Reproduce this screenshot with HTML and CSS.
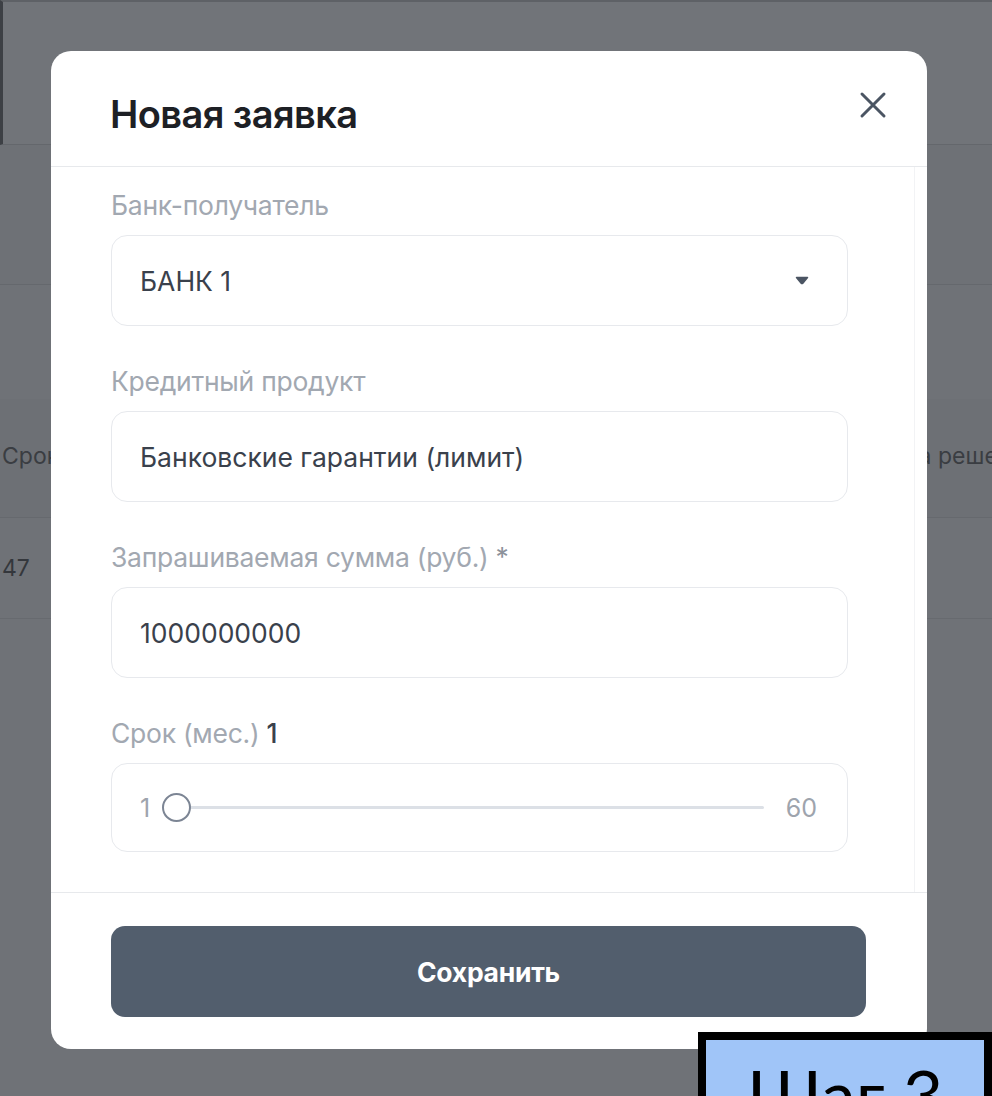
FILE: index.html
```html
<!DOCTYPE html>
<html lang="ru">
<head>
<meta charset="utf-8">
<title>Новая заявка</title>
<link rel="stylesheet" href="styles.css">
</head>
<body>
<div class="page">
  <div class="topbar"></div>
  <div class="band"></div>
  <div class="spacer"></div>
  <div class="thead">
    <span class="cell-left">Срок</span>
    <span class="cell-right">Дата решения</span>
  </div>
  <div class="trow">
    <span class="cell-left">47</span>
  </div>
</div>

<div class="modal">
  <div class="modal-header">
    <h2 class="modal-title">Новая заявка</h2>
    <button class="close-btn" type="button" aria-label="Закрыть">
      <svg width="28" height="28" viewBox="0 0 28 28"><path d="M3 3 L25 25 M25 3 L3 25" stroke="#4b5563" stroke-width="3" stroke-linecap="round" fill="none"/></svg>
    </button>
  </div>
  <div class="modal-body">
    <div class="field">
      <div class="label">Банк-получатель</div>
      <div class="input select">
        <span>БАНК 1</span>
        <svg class="caret" width="14" height="9" viewBox="0 0 14 9"><path d="M1.5 1.5 H12.5 L7.8 7.2 Q7 8 6.2 7.2 Z" fill="#4b5563" stroke="#4b5563" stroke-width="1.5" stroke-linejoin="round"/></svg>
      </div>
    </div>
    <div class="field">
      <div class="label">Кредитный продукт</div>
      <div class="input"><span>Банковские гарантии (лимит)</span></div>
    </div>
    <div class="field">
      <div class="label">Запрашиваемая сумма (руб.) <span class="req">*</span></div>
      <div class="input"><span>1000000000</span></div>
    </div>
    <div class="field">
      <div class="label">Срок (мес.) <span class="val">1</span></div>
      <div class="input slider">
        <span class="min">1</span>
        <div class="range"><span class="thumb"></span></div>
        <span class="max">60</span>
      </div>
    </div>
  </div>
  <div class="modal-footer">
    <button class="save-btn" type="button">Сохранить</button>
  </div>
</div>

<div class="step">Шаг 3</div>
</body>
</html>
```
FILE: styles.css
```css
html, body {
  margin: 0;
  padding: 0;
  width: 992px;
  height: 1096px;
  overflow: hidden;
}
body {
  position: relative;
  font-family: Inter, "Noto Sans", sans-serif;
  background: #6f7277;
}
.page {
  width: 992px;
  height: 1096px;
  background: #6f7277;
  display: flex;
  flex-direction: column;
}
.topbar {
  height: 142px;
  background: #717479;
  border-top: 2px solid #5e6166;
  border-left: 3px solid #3d4045;
  border-bottom: 1px solid #64676c;
}
.band {
  height: 139px;
  background: #6e7176;
  border-bottom: 1px solid #65686d;
}
.spacer {
  height: 114px;
  background: #6f7277;
}
.thead {
  height: 119px;
  background: #6d7075;
  border-bottom: 1px solid #66696e;
  display: flex;
  align-items: flex-start;
  padding-top: 44px;
  box-sizing: border-box;
  font-size: 23px;
  line-height: 26px;
  color: #3a3d42;
  white-space: nowrap;
  overflow: hidden;
}
.trow {
  height: 100px;
  border-bottom: 1px solid #676a6f;
  display: flex;
  align-items: center;
  font-size: 23px;
  color: #34373c;
}
.cell-left {
  padding-left: 2px;
}
.cell-right {
  margin-left: 817px;
}

.modal {
  position: absolute;
  left: 51px;
  top: 51px;
  width: 876px;
  background: #ffffff;
  border-radius: 20px;
  display: flex;
  flex-direction: column;
}
.modal-header {
  height: 115px;
  border-bottom: 1px solid #e7e9ec;
  display: flex;
  justify-content: space-between;
  align-items: flex-start;
  padding: 0 40px 0 59px;
}
.modal-title {
  margin: 41px 0 0 0;
  font-size: 38px;
  line-height: 44px;
  font-weight: 600;
  letter-spacing: -0.015em;
  color: #1d2025;
}
.close-btn {
  margin-top: 40px;
  width: 28px;
  height: 28px;
  padding: 0;
  border: none;
  background: none;
  display: flex;
}
.modal-body {
  margin-right: 12px;
  border-right: 1px solid #f2f3f5;
  padding: 20px 66px 40px 60px;
  display: flex;
  flex-direction: column;
  gap: 37px;
}
.label {
  height: 36px;
  line-height: 36px;
  margin-bottom: 12px;
  font-size: 26.5px;
  color: #a2a8b1;
  letter-spacing: -0.01em;
}
.label .req {
  color: #8c929b;
}
.label .val {
  color: #3a414c;
  font-weight: 500;
}
.input {
  height: 91px;
  box-sizing: border-box;
  border: 1px solid #e7e9ed;
  border-radius: 16px;
  padding: 0 28px;
  display: flex;
  align-items: center;
  font-size: 26.5px;
  color: #3a414c;
}
.select {
  justify-content: space-between;
  padding-right: 38px;
}
.caret {
  display: block;
}
.slider {
  height: 89px;
  padding: 0 30px 0 28px;
  font-size: 25px;
  color: #9ea4ad;
}
.min {
  width: 12px;
}
.range {
  flex: 1;
  margin-left: 10px;
  height: 29px;
  position: relative;
}
.range::before {
  content: "";
  position: absolute;
  left: 20px;
  right: 0;
  top: 13px;
  height: 3px;
  background: #dce0e6;
  border-radius: 2px;
}
.thumb {
  position: absolute;
  left: 0;
  top: 0;
  width: 29px;
  height: 29px;
  box-sizing: border-box;
  border: 2.5px solid #7c8594;
  border-radius: 50%;
  background: #ffffff;
}
.max {
  margin-left: 22px;
}
.modal-footer {
  border-top: 1px solid #e7e9ec;
  padding: 33px 61px 32px 60px;
}
.save-btn {
  width: 100%;
  height: 91px;
  border: none;
  border-radius: 14px;
  background: #525e6d;
  color: #ffffff;
  font-family: Inter, "Noto Sans", sans-serif;
  font-size: 26.5px;
  font-weight: 700;
  letter-spacing: -0.01em;
}

.step {
  position: absolute;
  left: 698px;
  top: 1032px;
  width: 294px;
  height: 110px;
  box-sizing: border-box;
  border: 8px solid #000000;
  background: #a0c5f8;
  font-family: Lato, "Open Sans", sans-serif;
  font-size: 70px;
  line-height: 1;
  padding-top: 19px;
  text-align: center;
  color: #000000;
}
```
